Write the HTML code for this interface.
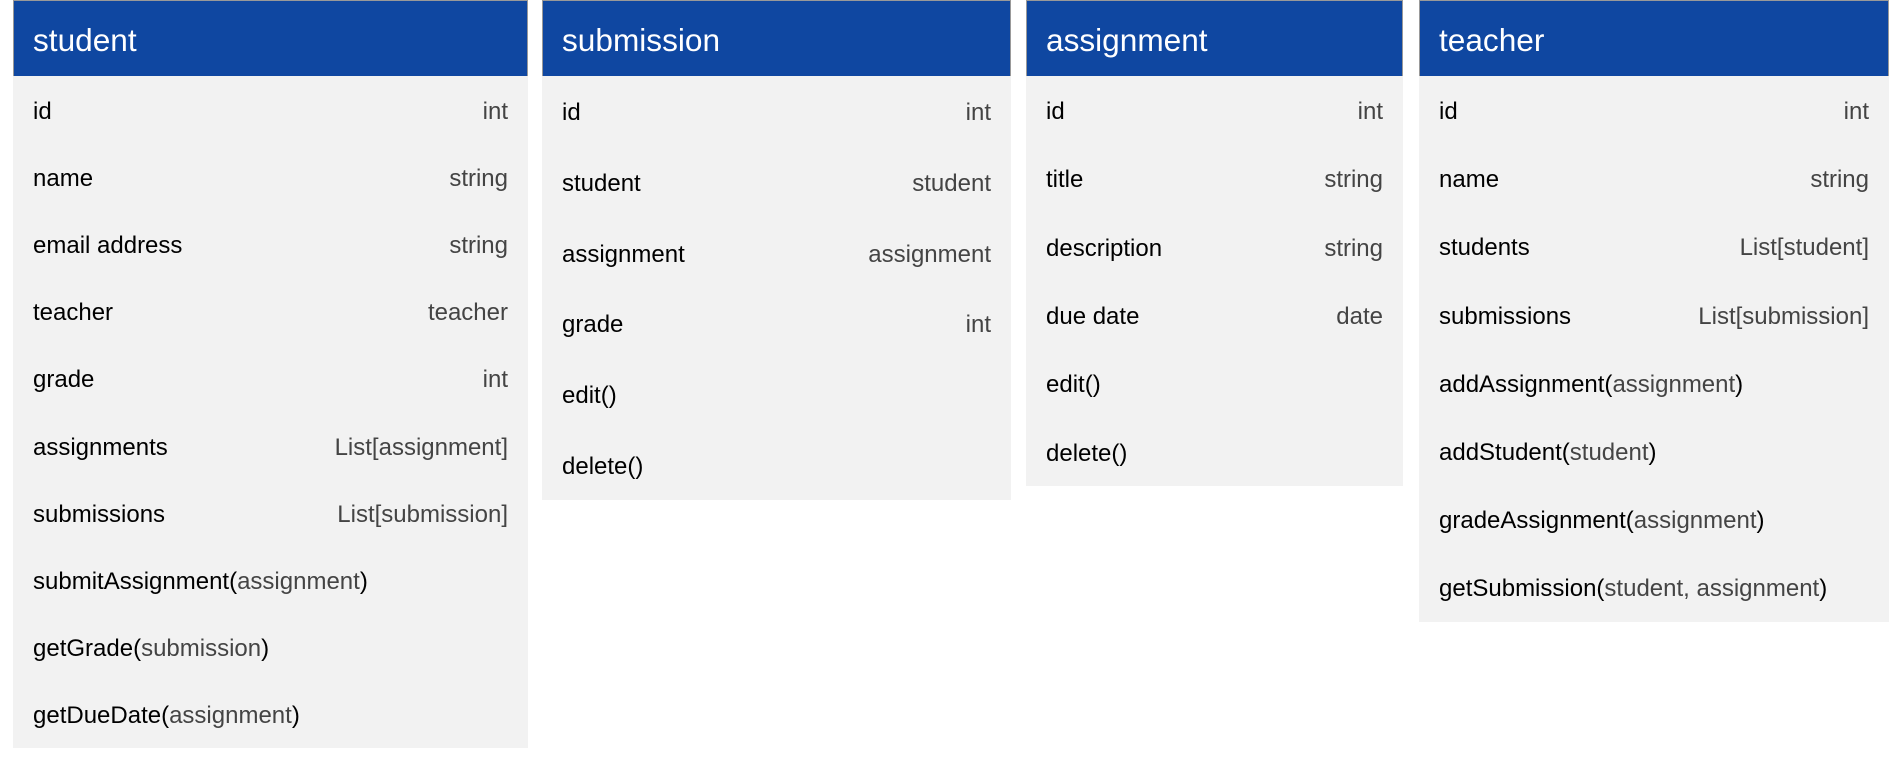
<!DOCTYPE html>
<html><head><style>
html,body{margin:0;padding:0;background:#fff;width:1904px;height:764px;overflow:hidden;font-family:"Liberation Sans",sans-serif;}
.t{position:absolute;top:0;background:#f2f2f2;}
.h{height:75px;background:#0f47a1;border:1px solid #999;border-bottom:none;color:#fff;font-size:31.6px;line-height:78px;padding-left:19px;box-sizing:content-box;}
.r{display:flex;justify-content:space-between;align-items:center;padding:4px 20px 0;box-sizing:border-box;font-size:24px;color:#000;}
.r span.ty{color:#444;}
.g{color:#444;}
</style></head><body>
<div class="t" style="left:13px;width:515px;">
<div class="h">student</div>
<div class="r" style="height:67.2px"><span>id</span><span class="ty">int</span></div>
<div class="r" style="height:67.2px"><span>name</span><span class="ty">string</span></div>
<div class="r" style="height:67.2px"><span>email address</span><span class="ty">string</span></div>
<div class="r" style="height:67.2px"><span>teacher</span><span class="ty">teacher</span></div>
<div class="r" style="height:67.2px"><span>grade</span><span class="ty">int</span></div>
<div class="r" style="height:67.2px"><span>assignments</span><span class="ty">List[assignment]</span></div>
<div class="r" style="height:67.2px"><span>submissions</span><span class="ty">List[submission]</span></div>
<div class="r" style="height:67.2px"><span>submitAssignment(<span class="g">assignment</span>)</span></div>
<div class="r" style="height:67.2px"><span>getGrade(<span class="g">submission</span>)</span></div>
<div class="r" style="height:67.2px"><span>getDueDate(<span class="g">assignment</span>)</span></div>
</div>
<div class="t" style="left:542px;width:469px;">
<div class="h">submission</div>
<div class="r" style="height:70.7px"><span>id</span><span class="ty">int</span></div>
<div class="r" style="height:70.7px"><span>student</span><span class="ty">student</span></div>
<div class="r" style="height:70.7px"><span>assignment</span><span class="ty">assignment</span></div>
<div class="r" style="height:70.7px"><span>grade</span><span class="ty">int</span></div>
<div class="r" style="height:70.7px"><span>edit()</span></div>
<div class="r" style="height:70.7px"><span>delete()</span></div>
</div>
<div class="t" style="left:1026px;width:377px;">
<div class="h">assignment</div>
<div class="r" style="height:68.3px"><span>id</span><span class="ty">int</span></div>
<div class="r" style="height:68.3px"><span>title</span><span class="ty">string</span></div>
<div class="r" style="height:68.3px"><span>description</span><span class="ty">string</span></div>
<div class="r" style="height:68.3px"><span>due date</span><span class="ty">date</span></div>
<div class="r" style="height:68.3px"><span>edit()</span></div>
<div class="r" style="height:68.3px"><span>delete()</span></div>
</div>
<div class="t" style="left:1419px;width:470px;">
<div class="h">teacher</div>
<div class="r" style="height:68.2px"><span>id</span><span class="ty">int</span></div>
<div class="r" style="height:68.2px"><span>name</span><span class="ty">string</span></div>
<div class="r" style="height:68.2px"><span>students</span><span class="ty">List[student]</span></div>
<div class="r" style="height:68.2px"><span>submissions</span><span class="ty">List[submission]</span></div>
<div class="r" style="height:68.2px"><span>addAssignment(<span class="g">assignment</span>)</span></div>
<div class="r" style="height:68.2px"><span>addStudent(<span class="g">student</span>)</span></div>
<div class="r" style="height:68.2px"><span>gradeAssignment(<span class="g">assignment</span>)</span></div>
<div class="r" style="height:68.2px"><span>getSubmission(<span class="g">student, assignment</span>)</span></div>
</div>
</body></html>
